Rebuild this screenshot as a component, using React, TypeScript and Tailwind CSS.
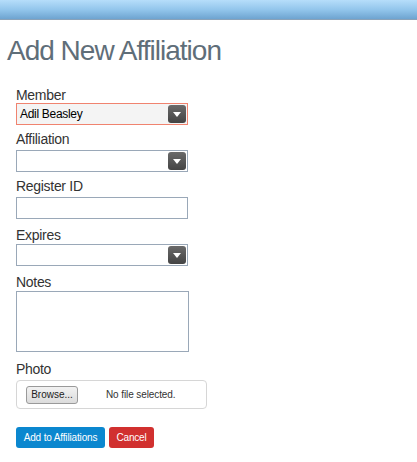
import React from 'react';

function Arrow() {
  return (
    <span className="absolute right-[1px] top-1/2 -translate-y-1/2 flex h-[18px] w-[18px] items-center justify-center rounded-[3px] bg-gradient-to-b from-[#6a6a6a] to-[#444]">
      <svg width="8" height="5" viewBox="0 0 8 5">
        <path d="M0 0 L8 0 L4 5 Z" fill="#fff" />
      </svg>
    </span>
  );
}

function SelectBox({ value, invalid }: { value?: string; invalid?: boolean }) {
  return (
    <div
      className={
        invalid
          ? 'relative h-[22px] w-[172px] border border-[#f0836f] bg-[#f4f4f4] pl-[3px] text-[12px] leading-[20px] tracking-[-0.3px] text-black'
          : 'relative h-[22px] w-[172px] border border-[#9aa8b8] bg-white pl-[3px] text-[12px] leading-[20px] tracking-[-0.3px] text-black'
      }
    >
      {value}
      <Arrow />
    </div>
  );
}

function Label({ children }: { children: React.ReactNode }) {
  return <div className="h-[16px] text-[14px] leading-[16px] tracking-[-0.3px] text-[#333]">{children}</div>;
}

export default function App() {
  return (
    <div className="min-h-[462px] bg-white font-['Liberation_Sans',Arial,sans-serif]">
      {/* top bar */}
      <div className="h-[20px] border-b border-[#8aa2b8] bg-gradient-to-b from-[#b6defa] via-[#93c6ec] to-[#6ea4d0]" />

      <h1 className="mt-[15px] pl-[7px] text-[28px] leading-[32px] tracking-[-1px] text-[#5f6e79]">
        Add New Affiliation
      </h1>

      <div className="flex flex-col pl-[16px] pt-[20px]">
        <Label>Member</Label>
        <SelectBox value="Adil Beasley" invalid />

        <div className="mt-[6px]">
          <Label>Affiliation</Label>
        </div>
        <div className="mt-[3px]">
          <SelectBox />
        </div>

        <div className="mt-[6px]">
          <Label>Register ID</Label>
        </div>
        <div className="mt-[3px] h-[22px] w-[172px] border border-[#9aa8b8] bg-white" />

        <div className="mt-[8px]">
          <Label>Expires</Label>
        </div>
        <div className="mt-[1px]">
          <SelectBox />
        </div>

        <div className="mt-[8px]">
          <Label>Notes</Label>
        </div>
        <div className="mt-[1px] h-[61px] w-[173px] border border-[#9aa8b8] bg-white" />

        <div className="mt-[9px]">
          <Label>Photo</Label>
        </div>
        <div className="mt-[3px] flex h-[29px] w-[191px] items-center rounded-[4px] border border-[#d6d6d6] bg-white pl-[9px] text-[10px]">
          <span className="flex h-[18px] w-[52px] items-center justify-center rounded-[3px] border border-[#9a9a9a] bg-gradient-to-b from-[#f2f2f2] to-[#dcdcdc] text-[#222]">
            Browse...
          </span>
          <span className="ml-[28px] tracking-[-0.1px] text-[#333]">No file selected.</span>
        </div>

        <div className="mt-[18px] flex gap-[4px]">
          <button className="h-[21px] w-[89px] rounded-[3px] bg-[#0b87cf] text-[10px] tracking-[-0.15px] text-white">
            Add to Affiliations
          </button>
          <button className="h-[21px] w-[45px] rounded-[3px] bg-[#d1302f] text-[10px] tracking-[-0.2px] text-white">
            Cancel
          </button>
        </div>
      </div>
    </div>
  );
}
